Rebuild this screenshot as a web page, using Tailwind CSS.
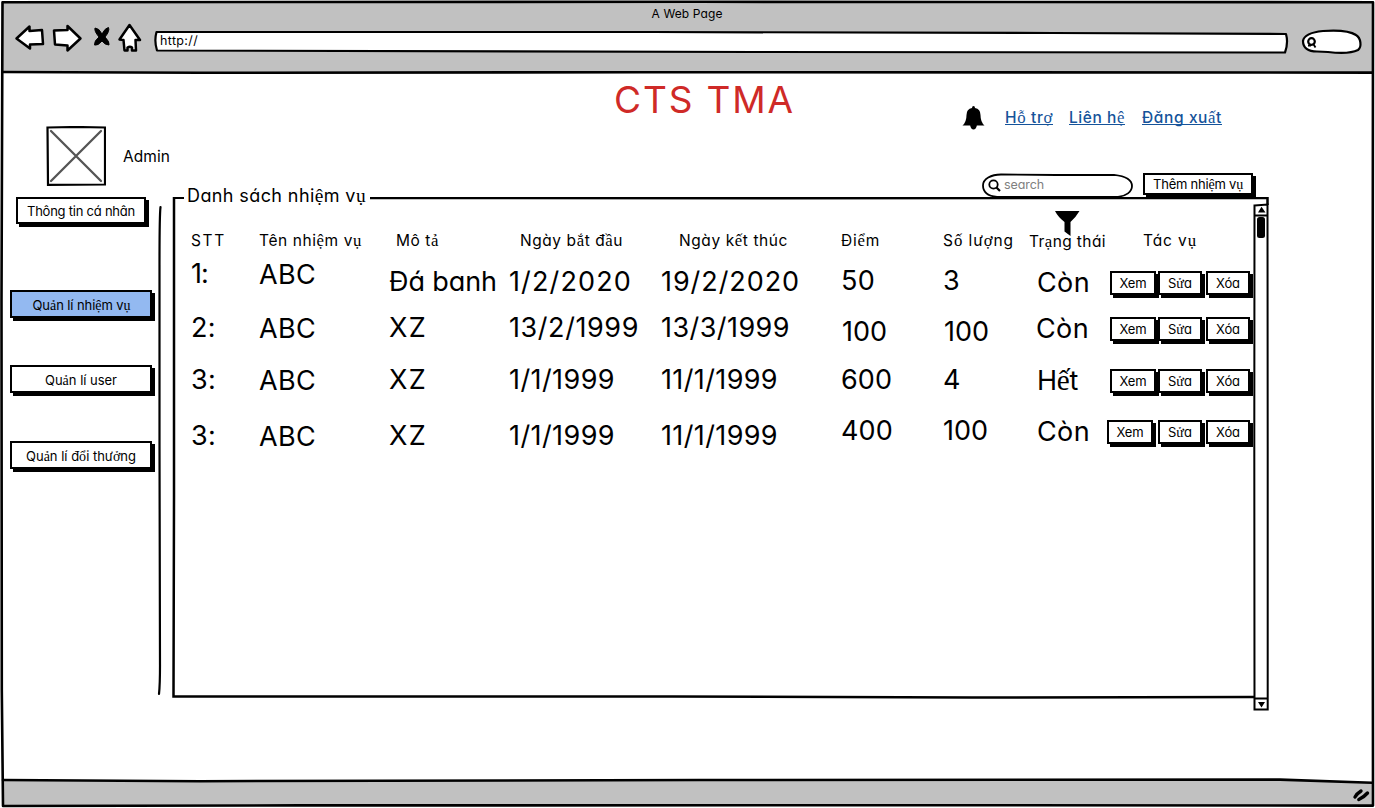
<!DOCTYPE html>
<html lang="vi">
<head>
<meta charset="utf-8">
<title>CTS TMA</title>
<script src="https://cdn.jsdelivr.net/npm/@tailwindcss/browser@4"></script>
</head>
<body class="w-[1375px] h-[808px] overflow-hidden bg-white text-black font-['Inter',sans-serif] [font-feature-settings:'cv11','calt'_0]">
<div class="relative flex h-[808px] w-[1375px] flex-col">

  <!-- window outline -->
  <svg class="absolute inset-0" width="1375" height="808" fill="none" stroke="#000" stroke-width="2.6" stroke-linejoin="round" stroke-linecap="round">
    <path fill="#c1c1c1" stroke="none" d="M3 2H1372V72H3ZM3 781L1290 780L1372 783V806H3Z"/>
    <path d="M2.5 2.2L700 1.8L1373 2.2L1372.6 400L1373 805.6L900 805.2L300 805.4L3 806L1.8 690L1.5 300Z"/>
    <path d="M3 72L200 72.8L640 72.2L1372 72.6M3 780L200 781.2L700 780L1280 779.6L1372 782.8"/>
    <path stroke-width="3.4" d="M1355 797Q1357 793.500 1361 791M1358.800 799.500Q1363.500 797.500 1367.500 793"/>
  </svg>

  <header class="relative h-[73px] shrink-0">
    <div class="flex justify-center pt-[6px] pr-px text-[12px] leading-4"><span data-w="71">A Web Page</span></div>
    <div class="-mt-[2px] flex items-center pl-[14px]">
      <svg width="132" height="32" fill="#fff" stroke="#000" stroke-width="2.500" stroke-linejoin="round">
        <path d="M2.500 16.500L15.500 4.500V9L28 8L29 22L16 22.500V26.500Z"/>
        <path d="M40 8.500L53.500 8V4L66.500 16.500L53.500 28.500V23.500L41 22.500Z"/>
        <path d="M115.500 3L105.500 17.500L109.500 18L110.500 28.500H113.500V25.500Q116 24 118 25.500V28.500H122L121.500 18H126Z"/>
        <path fill="#000" stroke-width="1" d="M81 6Q85 6 88 12Q91 6 94.500 5.500Q96 9 91 15Q96 20 95 23Q91 23 88 19Q84 24 80.500 23Q80 19 85 15Q80 9 81 6Z"/>
      </svg>
      <div class="relative ml-[7px] mt-[8px] flex h-[24px] w-[1136px] items-center">
        <svg class="absolute inset-0" width="1136" height="24" fill="#fff" stroke="#000" stroke-width="2.200" stroke-linejoin="round"><path d="M3.500 2L500 2L900 3L1133 4Q1135.500 13 1132 22.500L600 22L4 20.500Q1 11 3.500 2Z"/></svg>
        <span class="relative ml-[7px] text-[12.500px] leading-4 pb-0.5" data-w="38">http://</span>
      </div>
      <svg class="ml-[12px] mt-[8px]" width="62" height="28" fill="#fff" stroke="#000" stroke-width="2.200">
        <path d="M2 13C3 6 12 4 22 3C36 2 49 3 55 7C60 10 61 19 57 22C49 26 35 25 27 24L16 23.500C7 23.500 2 20 2 13Z"/>
        <circle cx="10.500" cy="13.500" r="3.300" fill="none"/><path d="M12 15.500L14.500 19.500M7 17.500H10" stroke-width="1.800"/>
      </svg>
    </div>
  </header>

  <main class="relative flex min-h-0 flex-1">
    <aside class="relative w-[172px] shrink-0 pt-[53px]">
      <div class="flex items-center pl-[46px]">
        <svg width="60" height="60" fill="none" stroke="#000" stroke-width="2.200"><path d="M1.500 1.500L30 1L59 1.500V58.500L2 58.800Z" fill="#fff"/><path stroke="#555" stroke-width="2.300" stroke-linecap="round" d="M5 5L55 55M55 5L5 55"/></svg>
        <span class="ml-[17px] pt-px whitespace-nowrap text-[15.500px] leading-5" data-w="47">Admin</span>
      </div>
      <button class="ml-[16px] mt-[11px] flex h-[27px] w-[130px] items-center justify-center border-2 border-black bg-white pt-[2px] text-[13px] shadow-[3px_3px_0_#000] whitespace-nowrap"><span data-w="108">Thông tin cá nhân</span></button>
      <button class="ml-[10px] mt-[66px] flex h-[28px] w-[142px] items-center justify-center border-2 border-black bg-[#93b9f1] pt-[3px] text-[13px] shadow-[3px_3px_0_#000] whitespace-nowrap"><span class="ml-px" data-w="98">Quản lí nhiệm vụ</span></button>
      <button class="ml-[10px] mt-[47px] flex h-[28px] w-[142px] items-center justify-center border-2 border-black bg-white pt-[3px] text-[13px] shadow-[3px_3px_0_#000] whitespace-nowrap"><span data-w="72">Quản lí user</span></button>
      <button class="ml-[10px] mt-[48px] flex h-[28px] w-[142px] items-center justify-center border-2 border-black bg-white pt-[3px] text-[13px] shadow-[3px_3px_0_#000] whitespace-nowrap"><span data-w="110">Quản lí đổi thưởng</span></button>
      <svg class="absolute left-[156px] top-[132px]" width="8" height="492" fill="none" stroke="#000" stroke-width="2.200" stroke-linecap="round"><path d="M4.500 2Q3.500 10 3.500 60V240Q4 400 4 460Q4 480 3 489"/></svg>
    </aside>

    <section class="flex w-[1100px] flex-col">
      <div class="flex h-[100px] shrink-0">
        <h1 class="ml-[442px] mt-[7px] whitespace-nowrap text-[37px] leading-10 text-[#cf2a27] w-[348px]"><span data-w="181">CTS TMA</span></h1>
        <svg class="mt-[32px]" width="23" height="26" viewBox="0 0 23 26"><path d="M11.500 1Q13 1 13 3Q18.500 4 18.500 10Q18.500 17 22.500 20.500H.5Q4.500 17 4.500 10Q4.500 4 10 3Q10 1 11.500 1ZM8 20H15Q14 24.500 11.500 24.500Q9 24.500 8 20Z"/></svg>
        <nav class="ml-[20px] mt-[34px] flex items-start gap-[16px] whitespace-nowrap text-[15.500px] font-medium leading-[21px] text-[#15539a]">
          <a class="h-[18px] border-b border-[#15539a]" data-w="48">Hỗ trợ</a>
          <a class="h-[18px] border-b border-[#15539a]" data-w="56">Liên hệ</a>
          <a class="h-[18px] border-b border-[#15539a] ml-px" data-w="80">Đăng xuất</a>
        </nav>
      </div>

      <div class="flex h-[24px] shrink-0 pl-[809px]">
        <div class="relative flex h-[26px] w-[153px] items-center">
          <svg class="absolute inset-0" width="153" height="26" fill="#fff" stroke="#000" stroke-width="1.800"><path d="M20 1.500L75 2L133 1.800C144 3 151 6 151 13C151 19 145 23 137 24L75 23.800L16 24C7 23 2 19 2 12.500C2 6 10 1.500 20 1.500Z"/><circle cx="12.500" cy="11.500" r="4.200"/><path stroke-width="2.200" d="M15.500 14.500L19 18"/></svg>
          <span class="relative ml-[23px] mb-0.5 text-[12.500px] leading-4 text-[#808080]" data-w="40">search</span>
        </div>
        <button class="relative ml-[9px] flex h-[22px] w-[110px] items-center justify-center border-2 border-black bg-white pt-[2px] text-[13px] shadow-[3px_3px_0_#000] whitespace-nowrap"><span data-w="90">Thêm nhiệm vụ</span></button>
      </div>

      <div class="relative h-[514px] shrink-0">
        <svg class="absolute left-0 top-0" width="1100" height="514" fill="none" stroke="#000" stroke-width="2">
          <path stroke-width="2.500" d="M12 .8H2V300L1.500 499.500L500 499.500L800 500.500L1082 500M198 1L600 1.200L1095.500 1V8"/>
          <path d="M1082.500 8.500L1095.500 7.500L1095.700 250V512.500H1082.500L1082.300 250ZM1082.500 18.500H1095.500M1082.500 501.500H1095.500"/>
          <path fill="#000" stroke="none" d="M1086 15.500L1089.500 9.800L1093.500 15.500ZM1086 505L1089.500 510.500L1093 505Z"/>
          <rect x="1085" y="20" width="8" height="21" rx="2.500" fill="#000" stroke="none"/>
          <path fill="#000" stroke="none" d="M883 14H907.500Q904 20 898.500 25V39L892.500 34.500V25Q886 20 883 14Z"/>
        </svg>
        <h2 class="relative -top-[11px] ml-[15px] h-[20px] w-[180px] whitespace-nowrap text-[18px] leading-5"><span data-w="179">Danh sách nhiệm vụ</span></h2>
        <div class="relative mt-[14px] ml-[19px] grid grid-cols-[68px_137px_124px_159px_162px_102px_86px_114px_auto] whitespace-nowrap text-[15.500px] leading-5">
          <div><span data-w="35">STT</span></div>
          <div><span data-w="103">Tên nhiệm vụ</span></div>
          <div><span data-w="43">Mô tả</span></div>
          <div><span data-w="103">Ngày bắt đầu</span></div>
          <div><span data-w="109">Ngày kết thúc</span></div>
          <div><span data-w="39">Điểm</span></div>
          <div><span data-w="71">Số lượng</span></div>
          <div class="pt-px"><span data-w="77">Trạng thái</span></div>
          <div><span data-w="54">Tác vụ</span></div>
        </div>
        <div id="rows" class="relative mt-[8px] ml-[19px]"></div>
      </div>
    </section>
  </main>
</div>

<script>
// Each row: height, x offset of the first button, top of the buttons, then [text, width, top offset, left offset]
const rows = [
  [54, 0, 11, ['1:',17,0,0],['ABC',57,1,0],['Đá banh',108,8,0],['1/2/2020',123,8,0],['19/2/2020',139,8,0],['50',34,7,0],['3',17,7,0],['Còn',53,9,0]],
  [52, 0, 3, ['2:',25,0,0],['ABC',57,1,0],['XZ',38,0,0],['13/2/1999',130,0,0],['13/3/1999',129,0,0],['100',45,4,1],['100',45,4,1],['Còn',53,1,-1]],
  [51, 0, 3, ['3:',25,0,0],['ABC',57,1,0],['XZ',38,0,0],['1/1/1999',106,0,0],['11/1/1999',117,0,0],['600',51,0,0],['4',17,0,0],['Hết',41,0,0]],
  [51, -3, 3, ['3:',25,5,0],['ABC',57,6,0],['XZ',38,5,0],['1/1/1999',106,5,0],['11/1/1999',117,5,0],['400',52,0,0],['100',45,0,0],['Còn',53,1,0]],
];
const btn = 'flex h-[24px] items-center justify-center border-2 border-black bg-white pb-px text-[13px] shadow-[3px_3px_0_#000]';
document.getElementById('rows').innerHTML = rows.map(([h, dx, by, ...cells]) =>
  `<div class="grid grid-cols-[68px_130px_120px_152px_180px_102px_94px_73px_auto] items-start whitespace-nowrap text-[27px] leading-7" style="height:${h}px">` +
  cells.map(([t, w, y, x]) => `<div style="padding-top:${y}px;margin-left:${x}px"><span data-w="${w}">${t}</span></div>`).join('') +
  `<div class="flex leading-4" style="padding-top:${by}px">
    <button class="${btn} w-[46px]" style="margin-left:${dx}px;margin-right:${2 - dx}px"><span data-w="27">Xem</span></button>
    <button class="${btn} w-[44px] mr-[4px]"><span data-w="24">Sửa</span></button>
    <button class="${btn} w-[44px]"><span data-w="24">Xóa</span></button>
  </div></div>`).join('');

const stacked = /([ỗợệấụảắầếểốạửổở])/g;
const labels = document.querySelectorAll('[data-w]');
labels.forEach(el => {
  el.innerHTML = el.textContent.replace(stacked, `<span class="font-['Liberation_Serif',serif] text-[1.08em] leading-none">$1</span>`);
  el.style.display = 'inline-block';
});

// Spread the letters of each label over its intended width
function fit() {
  labels.forEach(el => {
    el.style.letterSpacing = '0px';
    el.style.letterSpacing = ((+el.dataset.w - el.getBoundingClientRect().width) / [...el.textContent].length) + 'px';
  });
}
fit();
addEventListener('load', () => { fit(); requestAnimationFrame(fit); document.fonts.ready.then(fit); });
</script>
</body>
</html>
